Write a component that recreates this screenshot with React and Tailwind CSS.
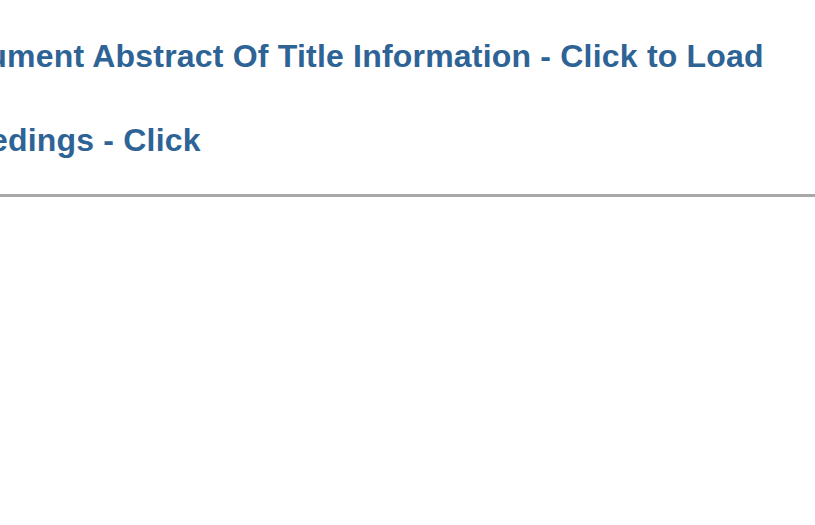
export default function App() {
  return (
    <div className="w-[815px] h-[525px] overflow-hidden bg-white font-['Liberation_Sans',Arial,sans-serif]">
      <div className="pt-[38px]">
        <h2 className="ml-[-83px] whitespace-nowrap text-[32px] leading-[36px] tracking-[0.2px] font-bold text-[#2e6395]">
          Instrument Abstract Of Title Information - Click to Load
        </h2>
        <h2 className="mt-[48px] ml-[-100px] whitespace-nowrap text-[32px] leading-[36px] tracking-[0.2px] font-bold text-[#2e6395]">
          Proceedings - Click
        </h2>
        <hr className="mt-[36px] border-0 h-[3px] bg-[#a8a8a8]" />
      </div>
    </div>
  );
}
